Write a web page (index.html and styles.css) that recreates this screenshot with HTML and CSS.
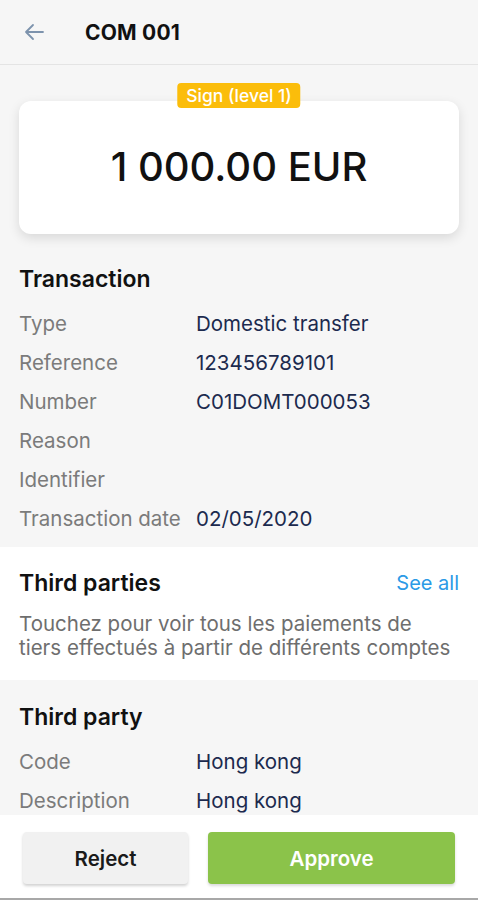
FILE: index.html
```html
<!DOCTYPE html>
<html lang="en">
<head>
    <meta charset="UTF-8">
    <meta name="viewport" content="width=device-width, initial-scale=1.0">
    <title>COM 001</title>
    <link rel="stylesheet" href="styles.css">
</head>
<body>
    <div class="app">
        <header class="topbar">
            <svg class="back" width="22" height="18" viewBox="0 0 22 18">
                <path d="M20 9H3M10 2L3 9l7 7" fill="none" stroke="#7d93ad" stroke-width="1.8" stroke-linecap="round" stroke-linejoin="round"/>
            </svg>
            <h1>COM 001</h1>
        </header>

        <main class="content">
            <section class="block grey">
                <div class="amount-card">
                    <span class="badge">Sign (level 1)</span>
                    <div class="amount">1 000.00 EUR</div>
                </div>

                <h2>Transaction</h2>
                <div class="rows">
                    <div class="row"><span class="label">Type</span><span class="value">Domestic transfer</span></div>
                    <div class="row"><span class="label">Reference</span><span class="value">123456789101</span></div>
                    <div class="row"><span class="label">Number</span><span class="value">C01DOMT000053</span></div>
                    <div class="row"><span class="label">Reason</span><span class="value"></span></div>
                    <div class="row"><span class="label">Identifier</span><span class="value"></span></div>
                    <div class="row"><span class="label">Transaction date</span><span class="value">02/05/2020</span></div>
                </div>
            </section>

            <section class="block white">
                <div class="head-line">
                    <h2>Third parties</h2>
                    <a class="see-all" href="#">See all</a>
                </div>
                <p class="hint">Touchez pour voir tous les paiements de tiers effectués à partir de différents comptes</p>
            </section>

            <section class="block grey fill">
                <h2>Third party</h2>
                <div class="rows">
                    <div class="row"><span class="label">Code</span><span class="value">Hong kong</span></div>
                    <div class="row"><span class="label">Description</span><span class="value">Hong kong</span></div>
                </div>
            </section>
        </main>

        <footer class="actions">
            <button class="btn reject">Reject</button>
            <button class="btn approve">Approve</button>
        </footer>
    </div>
</body>
</html>
```

FILE: styles.css
```css
* {
    box-sizing: border-box;
}
body {
    margin: 0;
    font-family: Inter, "Noto Sans", Arial, sans-serif;
    background: #f6f6f6;
    color: #111;
}
.app {
    height: 900px;
    display: flex;
    flex-direction: column;
    overflow: hidden;
}
.topbar {
    height: 65px;
    flex-shrink: 0;
    display: flex;
    align-items: center;
    padding-left: 23px;
    border-bottom: 1px solid #e4e4e4;
    background: #f6f6f6;
}
.back {
    margin-right: 40px;
}
.topbar h1 {
    margin: 0;
    font-size: 21px;
    font-weight: 700;
    color: #111;
    letter-spacing: 0.2px;
}
.content {
    flex: 1;
    display: flex;
    flex-direction: column;
    overflow: hidden;
}
.block {
    padding: 0 19px;
}
.grey {
    background: #f6f6f6;
}
.white {
    background: #fff;
}
.fill {
    flex: 1;
}
.amount-card {
    position: relative;
    margin: 36px 0 0;
    height: 133px;
    background: #fff;
    border-radius: 12px;
    box-shadow: 0 4px 12px rgba(0, 0, 0, 0.12);
    display: flex;
    align-items: center;
    justify-content: center;
}
.badge {
    position: absolute;
    top: -18px;
    left: 50%;
    transform: translateX(-50%);
    background: #fbbd0b;
    color: #fff;
    font-size: 17.5px;
    line-height: 19px;
    font-weight: 500;
    padding: 3px 9px;
    border-radius: 4px;
    white-space: nowrap;
}
.amount {
    font-size: 40px;
    font-weight: 500;
    color: #111;
    padding-bottom: 2px;
}
h2 {
    margin: 0;
    font-size: 23px;
    line-height: 28px;
    font-weight: 600;
    color: #111;
}
.grey h2 {
    padding-top: 31px;
}
.fill h2 {
    padding-top: 23px;
}
.rows {
    padding: 11px 0 9px;
}
.row {
    display: flex;
    height: 39px;
    align-items: center;
    font-size: 20.5px;
}
.label {
    width: 177px;
    flex-shrink: 0;
    color: #7b7b7b;
}
.value {
    color: #1c2a4e;
}
.head-line {
    display: flex;
    justify-content: space-between;
    align-items: center;
    padding-top: 22px;
}
.see-all {
    color: #2b9ae6;
    font-size: 20px;
    text-decoration: none;
}
.hint {
    margin: 15px 0 0;
    padding-bottom: 20px;
    font-size: 20.5px;
    line-height: 24px;
    color: #6e6e6e;
}
.actions {
    height: 85px;
    flex-shrink: 0;
    display: flex;
    gap: 20px;
    padding: 17px 23px 0;
    background: #fff;
    border-bottom: 2px solid #a8a8a8;
}
.btn {
    height: 52px;
    border: none;
    border-radius: 4px;
    font-family: inherit;
    font-size: 20.5px;
    font-weight: 600;
    cursor: pointer;
}
.reject {
    flex: 0 0 165px;
    background: #f1f1f1;
    color: #1a1a1a;
    box-shadow: 0 2px 3px rgba(0, 0, 0, 0.18);
}
.approve {
    flex: 1;
    background: #8bc34a;
    color: #fff;
    box-shadow: 0 2px 3px rgba(0, 0, 0, 0.15);
}
```
